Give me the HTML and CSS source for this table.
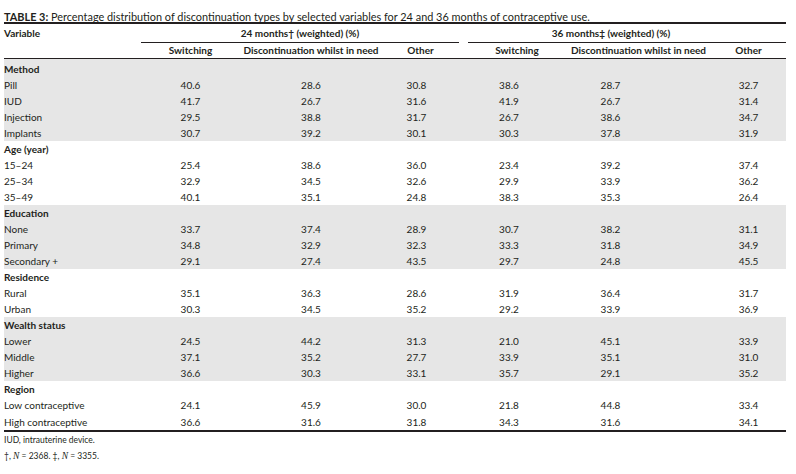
FILE: index.html
```html
<!DOCTYPE html>
<html lang="en">
<head>
<meta charset="utf-8">
<title>Table 3</title>
<link rel="stylesheet" href="styles.css">
</head>
<body>
<div class="page">
  <p class="caption"><b>TABLE 3:</b> Percentage distribution of discontinuation types by selected variables for 24 and 36 months of contraceptive use.</p>
  <table class="data">
    <colgroup>
      <col class="c-var"><col class="c-sw"><col class="c-dis"><col class="c-oth"><col class="c-gap"><col class="c-sw2"><col class="c-dis2"><col class="c-oth2">
    </colgroup>
    <thead>
      <tr class="h1">
        <th class="lbl">Variable</th>
        <th class="grp" colspan="3">24 months† (weighted) (%)</th>
        <th class="gap"></th>
        <th class="grp grp2" colspan="3">36 months‡ (weighted) (%)</th>
      </tr>
      <tr class="h2">
        <th class="lbl"></th>
        <th>Switching</th>
        <th>Discontinuation whilst in need</th>
        <th>Other</th>
        <th class="gap"></th>
        <th>Switching</th>
        <th>Discontinuation whilst in need</th>
        <th>Other</th>
      </tr>
    </thead>
    <tbody class="shade first">
      <tr class="grow"><td colspan="8">Method</td></tr>
      <tr><td>Pill</td><td>40.6</td><td>28.6</td><td class="o1">30.8</td><td></td><td class="s2">38.6</td><td class="d2">28.7</td><td>32.7</td></tr>
      <tr><td>IUD</td><td>41.7</td><td>26.7</td><td class="o1">31.6</td><td></td><td class="s2">41.9</td><td class="d2">26.7</td><td>31.4</td></tr>
      <tr><td>Injection</td><td>29.5</td><td>38.8</td><td class="o1">31.7</td><td></td><td class="s2">26.7</td><td class="d2">38.6</td><td>34.7</td></tr>
      <tr><td>Implants</td><td>30.7</td><td>39.2</td><td class="o1">30.1</td><td></td><td class="s2">30.3</td><td class="d2">37.8</td><td>31.9</td></tr>
    </tbody>
    <tbody>
      <tr class="grow"><td colspan="8">Age (year)</td></tr>
      <tr><td>15–24</td><td>25.4</td><td>38.6</td><td class="o1">36.0</td><td></td><td class="s2">23.4</td><td class="d2">39.2</td><td>37.4</td></tr>
      <tr><td>25–34</td><td>32.9</td><td>34.5</td><td class="o1">32.6</td><td></td><td class="s2">29.9</td><td class="d2">33.9</td><td>36.2</td></tr>
      <tr><td>35–49</td><td>40.1</td><td>35.1</td><td class="o1">24.8</td><td></td><td class="s2">38.3</td><td class="d2">35.3</td><td>26.4</td></tr>
    </tbody>
    <tbody class="shade">
      <tr class="grow"><td colspan="8">Education</td></tr>
      <tr><td>None</td><td>33.7</td><td>37.4</td><td class="o1">28.9</td><td></td><td class="s2">30.7</td><td class="d2">38.2</td><td>31.1</td></tr>
      <tr><td>Primary</td><td>34.8</td><td>32.9</td><td class="o1">32.3</td><td></td><td class="s2">33.3</td><td class="d2">31.8</td><td>34.9</td></tr>
      <tr><td>Secondary +</td><td>29.1</td><td>27.4</td><td class="o1">43.5</td><td></td><td class="s2">29.7</td><td class="d2">24.8</td><td>45.5</td></tr>
    </tbody>
    <tbody>
      <tr class="grow"><td colspan="8">Residence</td></tr>
      <tr><td>Rural</td><td>35.1</td><td>36.3</td><td class="o1">28.6</td><td></td><td class="s2">31.9</td><td class="d2">36.4</td><td>31.7</td></tr>
      <tr><td>Urban</td><td>30.3</td><td>34.5</td><td class="o1">35.2</td><td></td><td class="s2">29.2</td><td class="d2">33.9</td><td>36.9</td></tr>
    </tbody>
    <tbody class="shade">
      <tr class="grow"><td colspan="8">Wealth status</td></tr>
      <tr><td>Lower</td><td>24.5</td><td>44.2</td><td class="o1">31.3</td><td></td><td class="s2">21.0</td><td class="d2">45.1</td><td>33.9</td></tr>
      <tr><td>Middle</td><td>37.1</td><td>35.2</td><td class="o1">27.7</td><td></td><td class="s2">33.9</td><td class="d2">35.1</td><td>31.0</td></tr>
      <tr><td>Higher</td><td>36.6</td><td>30.3</td><td class="o1">33.1</td><td></td><td class="s2">35.7</td><td class="d2">29.1</td><td>35.2</td></tr>
    </tbody>
    <tbody class="last">
      <tr class="grow"><td colspan="8">Region</td></tr>
      <tr><td>Low contraceptive</td><td>24.1</td><td>45.9</td><td class="o1">30.0</td><td></td><td class="s2">21.8</td><td class="d2">44.8</td><td>33.4</td></tr>
      <tr class="end"><td>High contraceptive</td><td>36.6</td><td>31.6</td><td class="o1">31.8</td><td></td><td class="s2">34.3</td><td class="d2">31.6</td><td>34.1</td></tr>
    </tbody>
  </table>
  <p class="note">IUD, intrauterine device.</p>
  <p class="note">†, <i>N</i> = 2368. ‡, <i>N</i> = 3355.</p>
</div>
</body>
</html>
```

FILE: styles.css
```css
html, body {
  margin: 0;
  padding: 0;
  background: #ffffff;
}

.page {
  padding: 12px 0 0 4px;
  width: 782px;
  font-family: Lato, "Open Sans", sans-serif;
  font-size: 10px;
  color: #231f20;
}

.caption {
  margin: 0;
  font-size: 10.9px;
  line-height: 10px;
  white-space: nowrap;
}

.caption b {
  font-weight: 700;
}

.data {
  width: 782px;
  table-layout: fixed;
  border-collapse: separate;
  border-spacing: 0;
}

.c-var { width: 137px; }
.c-sw { width: 99px; }
.c-dis { width: 142px; }
.c-oth { width: 77px; }
.c-gap { width: 9px; }
.c-sw2 { width: 98px; }
.c-dis2 { width: 145px; }
.c-oth2 { width: 75px; }

.data th,
.data td {
  padding: 0;
  text-align: center;
  white-space: nowrap;
  font-weight: 400;
}

.data th {
  font-weight: 700;
}

.data th.lbl,
.data td:first-child {
  text-align: left;
}

.h1 th {
  height: 18px;
  line-height: 18px;
  border-top: 2px solid #231f20;
  border-bottom: 1px solid transparent;
}

.h1 th.grp {
  border-bottom-color: #231f20;
}

.h1 th.grp2 {
  padding-right: 32px;
}

.h2 th {
  height: 15px;
  line-height: 15px;
  border-bottom: 1px solid #231f20;
}

.data td {
  height: 16px;
  line-height: 16px;
}

.grow td {
  font-weight: 700;
}

.first .grow td {
  height: 16px;
  padding-top: 2px;
}

.shade td {
  background: #e6e6e6;
}

.data td.o1 { padding-right: 8px; }
.data td.s2 { padding-right: 16px; }
.data td.d2 { padding-right: 56px; }

.end td {
  border-bottom: 2px solid #231f20;
  height: 17px;
}

.note {
  margin: 0;
  font-size: 8.5px;
  line-height: 16px;
}

.note:first-of-type {
  margin-top: 2px;
}

.note i {
  font-family: "Liberation Serif", serif;
  font-size: 9.5px;
}
```
